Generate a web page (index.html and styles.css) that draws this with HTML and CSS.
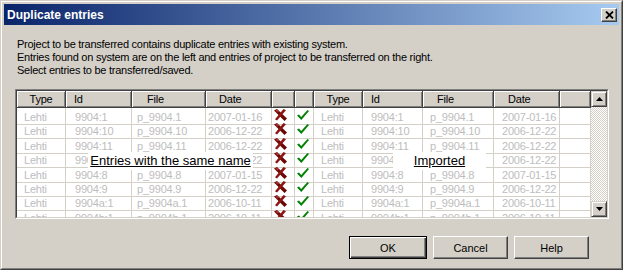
FILE: index.html
```html
<!DOCTYPE html>
<html lang="en">
<head>
  <meta charset="UTF-8" />
  <title>Duplicate entries</title>
  <link rel="stylesheet" href="styles.css">
</head>
<body>

  <svg class="defs" width="0" height="0">
    <symbol id="mark-x" viewBox="0 0 13 12">
      <polygon points="0,1.5 3,0 13,9.5 10.5,12" fill="#6a0808" />
      <polygon points="9.5,0 12,1.2 3,11.5 1,10.2" fill="#8e1414" />
      <polygon points="1.5,1.2 3,0.6 5,2.6 3.5,3.6" fill="#b83030" />
    </symbol>
    <symbol id="mark-ok" viewBox="0 0 12 10">
      <polygon points="0,5.5 2,4.5 4.2,7 10.5,0 12,1 4.3,10" fill="#008000" />
    </symbol>
  </svg>

  <div class="window">
    <div class="frame">
      <div class="titlebar">
        <span class="title">Duplicate entries</span>
        <button class="close-btn">
          <svg width="9" height="8" viewBox="0 0 9 8">
            <path d="M1 0.5 L8 7.5 M8 0.5 L1 7.5" stroke="#000" stroke-width="1.8" />
          </svg>
        </button>
      </div>

      <div class="content">
        <p class="intro">
          Project to be transferred contains duplicate entries with existing system.<br>
          Entries found on system are on the left and entries of project to be transferred on the right.<br>
          Select entries to be transferred/saved.
        </p>

        <div class="table-box">
          <div class="table-inner">
            <div class="grid">
              <div class="row head">
                <div class="hcell">Type</div><div class="hcell">Id</div><div class="hcell">File</div><div class="hcell">Date</div>
                <div class="hcell"></div><div class="hcell"></div>
                <div class="hcell">Type</div><div class="hcell">Id</div><div class="hcell">File</div><div class="hcell">Date</div>
                <div class="hcell"></div>
              </div>

              <div class="row">
                <div class="cell">Lehti</div><div class="cell">9904:1</div><div class="cell">p_9904.1</div><div class="cell">2007-01-16</div>
                <div class="cell"><svg class="mx"><use href="#mark-x" /></svg></div><div class="cell"><svg class="mok"><use href="#mark-ok" /></svg></div>
                <div class="cell">Lehti</div><div class="cell">9904:1</div><div class="cell">p_9904.1</div><div class="cell">2007-01-16</div>
                <div class="cell"></div>
              </div>
              <div class="row">
                <div class="cell">Lehti</div><div class="cell">9904:10</div><div class="cell">p_9904.10</div><div class="cell">2006-12-22</div>
                <div class="cell"><svg class="mx"><use href="#mark-x" /></svg></div><div class="cell"><svg class="mok"><use href="#mark-ok" /></svg></div>
                <div class="cell">Lehti</div><div class="cell">9904:10</div><div class="cell">p_9904.10</div><div class="cell">2006-12-22</div>
                <div class="cell"></div>
              </div>
              <div class="row">
                <div class="cell">Lehti</div><div class="cell">9904:11</div><div class="cell">p_9904.11</div><div class="cell">2006-12-22</div>
                <div class="cell"><svg class="mx"><use href="#mark-x" /></svg></div><div class="cell"><svg class="mok"><use href="#mark-ok" /></svg></div>
                <div class="cell">Lehti</div><div class="cell">9904:11</div><div class="cell">p_9904.11</div><div class="cell">2006-12-22</div>
                <div class="cell"></div>
              </div>
              <div class="row">
                <div class="cell">Lehti</div><div class="cell">9904:12</div><div class="cell">p_9904.12</div><div class="cell">2006-12-22</div>
                <div class="cell"><svg class="mx"><use href="#mark-x" /></svg></div><div class="cell"><svg class="mok"><use href="#mark-ok" /></svg></div>
                <div class="cell">Lehti</div><div class="cell">9904:12</div><div class="cell">p_9904.12</div><div class="cell">2006-12-22</div>
                <div class="cell"></div>
              </div>
              <div class="row">
                <div class="cell">Lehti</div><div class="cell">9904:8</div><div class="cell">p_9904.8</div><div class="cell">2007-01-15</div>
                <div class="cell"><svg class="mx"><use href="#mark-x" /></svg></div><div class="cell"><svg class="mok"><use href="#mark-ok" /></svg></div>
                <div class="cell">Lehti</div><div class="cell">9904:8</div><div class="cell">p_9904.8</div><div class="cell">2007-01-15</div>
                <div class="cell"></div>
              </div>
              <div class="row">
                <div class="cell">Lehti</div><div class="cell">9904:9</div><div class="cell">p_9904.9</div><div class="cell">2006-12-22</div>
                <div class="cell"><svg class="mx"><use href="#mark-x" /></svg></div><div class="cell"><svg class="mok"><use href="#mark-ok" /></svg></div>
                <div class="cell">Lehti</div><div class="cell">9904:9</div><div class="cell">p_9904.9</div><div class="cell">2006-12-22</div>
                <div class="cell"></div>
              </div>
              <div class="row">
                <div class="cell">Lehti</div><div class="cell">9904a:1</div><div class="cell">p_9904a.1</div><div class="cell">2006-10-11</div>
                <div class="cell"><svg class="mx"><use href="#mark-x" /></svg></div><div class="cell"><svg class="mok"><use href="#mark-ok" /></svg></div>
                <div class="cell">Lehti</div><div class="cell">9904a:1</div><div class="cell">p_9904a.1</div><div class="cell">2006-10-11</div>
                <div class="cell"></div>
              </div>
              <div class="row">
                <div class="cell">Lehti</div><div class="cell">9904b:1</div><div class="cell">p_9904b.1</div><div class="cell">2006-10-11</div>
                <div class="cell"><svg class="mx"><use href="#mark-x" /></svg></div><div class="cell"><svg class="mok"><use href="#mark-ok" /></svg></div>
                <div class="cell">Lehti</div><div class="cell">9904b:1</div><div class="cell">p_9904b.1</div><div class="cell">2006-10-11</div>
                <div class="cell"></div>
              </div>
            </div>

            <div class="scrollbar">
              <div class="scroll-btn">
                <svg width="7" height="4" viewBox="0 0 7 4"><polygon points="0,4 3.5,0 7,4" fill="#000" /></svg>
              </div>
              <div class="scroll-track"></div>
              <div class="scroll-btn">
                <svg width="7" height="4" viewBox="0 0 7 4"><polygon points="0,0 7,0 3.5,4" fill="#000" /></svg>
              </div>
            </div>
          </div>

          <div class="tag tag-left">Entries with the same name</div>
          <div class="tag tag-right">Imported</div>
        </div>

        <div class="buttons">
          <button class="btn btn-default">OK</button>
          <button class="btn">Cancel</button>
          <button class="btn">Help</button>
        </div>
      </div>
    </div>
  </div>

</body>
</html>
```

FILE: styles.css
```css
/* General */
body {
  margin: 0;
  background: #fff;
  font-family: "Liberation Sans", Arial, sans-serif;
  font-size: 11px;
  color: #000;
}

.defs {
  position: absolute;
}

/* Window frame */
.window {
  width: 623px;
  height: 270px;
  box-sizing: border-box;
  border: 1px solid;
  border-color: #d4d0c8 #404040 #404040 #d4d0c8;
  background: #d4d0c8;
}

.frame {
  height: 100%;
  box-sizing: border-box;
  border: 1px solid;
  border-color: #fff #808080 #808080 #fff;
  padding: 2px;
  display: flex;
  flex-direction: column;
}

/* Title bar */
.titlebar {
  height: 21px;
  flex-shrink: 0;
  display: flex;
  align-items: center;
  justify-content: space-between;
  padding: 0 2px 0 3px;
  background: linear-gradient(to right, #0a246a, #a6caf0);
}

.title {
  color: #fff;
  font-weight: bold;
  font-size: 12px;
}

.close-btn {
  width: 16px;
  height: 14px;
  padding: 0;
  background: #d4d0c8;
  border: 1px solid;
  border-color: #fff #404040 #404040 #fff;
  box-shadow: inset -1px -1px #808080;
  display: flex;
  align-items: center;
  justify-content: center;
}

/* Content */
.content {
  flex: 1;
  padding: 13px 10px 7px 11px;
  display: flex;
  flex-direction: column;
}

.intro {
  margin: 0 0 0 2px;
  line-height: 13px;
  letter-spacing: -0.25px;
}

/* Table */
.table-box {
  position: relative;
  height: 130px;
  margin-top: 12px;
  box-sizing: border-box;
  border: 1px solid;
  border-color: #808080 #fff #fff #808080;
}

.table-inner {
  height: 100%;
  box-sizing: border-box;
  border: 1px solid;
  border-color: #404040 #d4d0c8 #d4d0c8 #404040;
  display: flex;
}

.grid {
  flex: 1;
  overflow: hidden;
  background: #fff;
}

.row {
  display: grid;
  grid-template-columns: 49px 66px 74px 66px 23px 19px 49px 60px 71px 66px 31px;
  height: 14.4px;
}

.row.head {
  height: 17px;
}

.hcell {
  box-sizing: border-box;
  background: #d4d0c8;
  border-right: 1px solid #404040;
  border-bottom: 1px solid #404040;
  box-shadow: inset 1px 1px #fff, inset -1px -1px #808080;
  line-height: 15px;
  padding-top: 1px;
  letter-spacing: -0.2px;
  white-space: nowrap;
}

.hcell:nth-child(1), .hcell:nth-child(7) { text-align: center; }
.hcell:nth-child(2), .hcell:nth-child(8) { padding-left: 8px; }
.hcell:nth-child(3) { padding-left: 15px; }
.hcell:nth-child(9) { padding-left: 14px; }
.hcell:nth-child(4) { padding-left: 13px; }
.hcell:nth-child(10) { padding-left: 14px; }

.cell {
  box-sizing: border-box;
  border-right: 1px solid #d4d0c8;
  border-bottom: 1px solid #d4d0c8;
  color: #bdbdbd;
  line-height: 14px;
  padding-top: 2px;
  letter-spacing: -0.2px;
  white-space: nowrap;
}

.cell:nth-child(1), .cell:nth-child(7) { padding-left: 7px; }
.cell:nth-child(2) { padding-left: 9px; }
.cell:nth-child(8) { padding-left: 8px; }
.cell:nth-child(3) { padding-left: 5px; }
.cell:nth-child(9) { padding-left: 7px; }
.cell:nth-child(4) { padding-left: 2px; }
.cell:nth-child(10) { padding-left: 8px; }

.cell:nth-child(5), .cell:nth-child(6) {
  padding: 0;
}

.mx {
  display: block;
  width: 13px;
  height: 12px;
  margin: 1px 0 0 2px;
}

.mok {
  display: block;
  width: 12px;
  height: 10px;
  margin: 2px 0 0 2px;
}

/* Scrollbar */
.scrollbar {
  width: 16px;
  display: flex;
  flex-direction: column;
}

.scroll-btn {
  height: 16px;
  flex-shrink: 0;
  box-sizing: border-box;
  background: #d4d0c8;
  border: 1px solid;
  border-color: #d4d0c8 #404040 #404040 #d4d0c8;
  box-shadow: inset 1px 1px #fff, inset -1px -1px #808080;
  display: flex;
  align-items: center;
  justify-content: center;
}

.scroll-track {
  flex: 1;
  background: repeating-conic-gradient(#fff 0 25%, #d4d0c8 0 50%) 0 0 / 2px 2px;
}

/* Overlay labels */
.tag {
  position: absolute;
  top: 62px;
  height: 18px;
  background: #fff;
  font-size: 13px;
  line-height: 18px;
  text-align: center;
  text-decoration: underline;
  white-space: nowrap;
}

.tag-left {
  left: 72px;
  width: 165px;
}

.tag-right {
  left: 377px;
  width: 93px;
}

/* Buttons */
.buttons {
  display: flex;
  justify-content: flex-end;
  gap: 6px;
  margin-top: 17px;
  padding-right: 20px;
}

.btn {
  width: 75px;
  height: 23px;
  padding: 0;
  font-family: "Liberation Sans", Arial, sans-serif;
  font-size: 11px;
  color: #000;
  background: #d4d0c8;
  border: 1px solid;
  border-color: #fff #404040 #404040 #fff;
  box-shadow: inset -1px -1px #808080;
}

.btn-default {
  width: 78px;
  border-color: #000;
  box-shadow: inset 1px 1px #fff, inset -1px -1px #404040, inset -2px -2px #808080;
}
```
